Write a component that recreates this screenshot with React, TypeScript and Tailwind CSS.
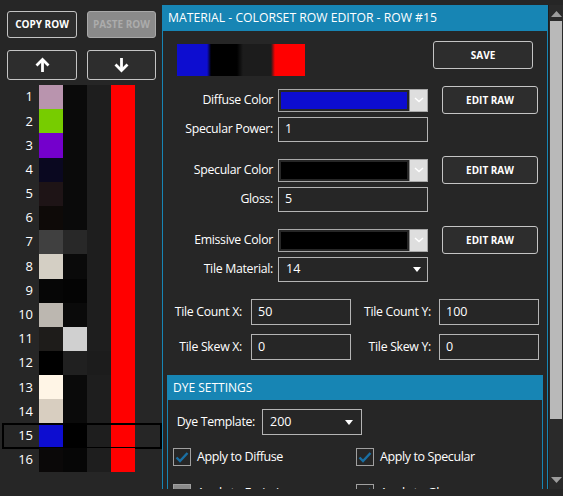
import React from "react";

const rows: [string, string, string][] = [
  ["#b994ae", "#0a0a0a", "#1e1e1e"],
  ["#77cc00", "#0a0a0a", "#1e1e1e"],
  ["#7400cc", "#0a0a0a", "#1e1e1e"],
  ["#0a0820", "#0a0a0a", "#1e1e1e"],
  ["#1e1416", "#0a0a0a", "#1e1e1e"],
  ["#0e0a08", "#0a0a0a", "#1e1e1e"],
  ["#404040", "#282828", "#1e1e1e"],
  ["#d4cfc4", "#0a0a0a", "#1e1e1e"],
  ["#060606", "#040404", "#1e1e1e"],
  ["#bcb7b0", "#0a0a0a", "#1e1e1e"],
  ["#1e1c1a", "#d0d0d0", "#1e1e1e"],
  ["#000000", "#202020", "#1c1c1c"],
  ["#fff5e6", "#0a0a0a", "#1e1e1e"],
  ["#d8cec0", "#0a0a0a", "#1e1e1e"],
  ["#0d0dd0", "#000000", "#1e1e1e"],
  ["#0a0808", "#060606", "#1e1e1e"],
];

function ArrowUp() {
  return (
    <svg width="17" height="16" viewBox="0 0 17 16" fill="none" stroke="white" strokeWidth="2.8">
      <path d="M8.5 15V3" />
      <path d="M2.5 8.5L8.5 2.5L14.5 8.5" />
    </svg>
  );
}
function ArrowDown() {
  return (
    <svg width="17" height="16" viewBox="0 0 17 16" fill="none" stroke="white" strokeWidth="2.8">
      <path d="M8.5 1V13" />
      <path d="M2.5 7.5L8.5 13.5L14.5 7.5" />
    </svg>
  );
}

function Btn({ children, w, h, disabled }: { children: React.ReactNode; w: string; h: string; disabled?: boolean }) {
  return (
    <div
      className={
        "flex items-center justify-center rounded-[3px] border font-bold text-[10px] " +
        w +
        " " +
        h +
        " " +
        (disabled ? "bg-[#8a8a8a] border-[#a8a8a8] text-[#acacac]" : "bg-[#2d2d2d] border-[#c4c4c4] text-white")
      }
    >
      {children}
    </div>
  );
}

function Left() {
  return (
    <div className="w-[162px] shrink-0 flex flex-col pt-[11px]">
      <div className="flex pl-[7px] gap-[10px]">
        <Btn w="w-[70px]" h="h-[27px]">COPY ROW</Btn>
        <Btn w="w-[69px]" h="h-[27px]" disabled>PASTE ROW</Btn>
      </div>
      <div className="flex pl-[7px] gap-[10px] mt-[12px]">
        <Btn w="w-[70px]" h="h-[30px]"><ArrowUp /></Btn>
        <Btn w="w-[69px]" h="h-[30px]"><ArrowDown /></Btn>
      </div>
      <div className="mt-[5px] flex flex-col">
        {rows.map((r, i) => (
          <div
            key={i}
            className={
              "flex h-[24.2px] ml-[3px] w-[158px] items-stretch " +
              (i === 14 ? "outline-2 outline-black -outline-offset-1" : "")
            }
          >
            <div className="w-[30px] text-right text-white text-[13px] flex items-center justify-end">{i + 1}</div>
            <div className="w-[6px]" />
            <div className="w-[24px]" style={{ background: r[0] }} />
            <div className="w-[24px]" style={{ background: r[1] }} />
            <div className="w-[24px]" style={{ background: r[2] }} />
            <div className="w-[24px] bg-[#ff0000]" />
          </div>
        ))}
      </div>
    </div>
  );
}

function Label({ children, w }: { children: React.ReactNode; w: string }) {
  return <div className={"text-right text-white text-[12.3px] tracking-[-0.3px] shrink-0 " + w}>{children}</div>;
}

function Input({ value, w, h }: { value: string; w: string; h: string }) {
  return (
    <div className={"border border-[#b4b4b4] flex items-center pl-[6px] text-white text-[12.5px] shrink-0 " + w + " " + h}>
      {value}
    </div>
  );
}

function Dropdown({ value, w, h, tri }: { value: string; w: string; h: string; tri: string }) {
  return (
    <div className={"border border-[#b4b4b4] flex items-center pl-[7px] text-white text-[12.5px] shrink-0 " + w + " " + h}>
      <span className="flex-1">{value}</span>
      <svg width="8" height="5" viewBox="0 0 8 5" className={tri}>
        <path d="M0 0H8L4 5Z" fill="white" />
      </svg>
    </div>
  );
}

function ColorCombo({ color }: { color: string }) {
  return (
    <div className="w-[150px] h-[23px] border border-[#a8a8a8] flex shrink-0">
      <div className="flex-1 p-[2px]">
        <div className="w-full h-full" style={{ background: color }} />
      </div>
      <div className="w-[18px] bg-[#dedede] border-l border-[#8c8c8c] flex items-center justify-center">
        <svg width="10" height="6" viewBox="0 0 10 6" fill="none">
          <path d="M1 1L5 4.5L9 1" stroke="white" strokeWidth="1.5" />
        </svg>
      </div>
    </div>
  );
}

function Check({ checked, filled }: { checked?: boolean; filled?: boolean }) {
  return (
    <div className={"w-[18px] h-[18px] border border-[#a0a0a0] shrink-0 flex items-center justify-center " + (filled ? "bg-[#8a8a8a]" : "")}>
      {checked && (
        <svg width="14" height="12" viewBox="0 0 14 12" fill="none">
          <path d="M1.5 6.5L5 10L12.5 2" stroke="#1a6fa3" strokeWidth="2.4" />
        </svg>
      )}
    </div>
  );
}

function CheckLabel({ children }: { children: React.ReactNode }) {
  return <span className="ml-[6px] text-white text-[12.5px] tracking-[-0.4px]">{children}</span>;
}

function Right() {
  return (
    <div className="w-[386px] shrink-0 mt-[5px] h-[484px] border-x border-[#1785b4] flex flex-col overflow-hidden">
      <div className="h-[26px] shrink-0 bg-[#1785b4] text-white text-[12.2px] pl-[5px] flex items-center">
        MATERIAL - COLORSET ROW EDITOR - ROW #15
      </div>
      <div className="flex items-start mt-[10px] shrink-0">
        <div className="ml-[14px] mt-[3px] w-[128px] h-[32px] bg-[linear-gradient(to_right,#0d0dd0_0px,#0d0dd0_30px,#000000_34px,#000000_60px,#1c1c1c_66px,#1c1c1c_94px,#ff0000_98px,#ff0000_128px)]" />
        <div className="ml-[128px]">
          <Btn w="w-[100px]" h="h-[28px]">SAVE</Btn>
        </div>
      </div>

      <div className="flex items-center h-[28px] mt-[10px] shrink-0">
        <Label w="w-[110px]">Diffuse Color</Label>
        <div className="ml-[5px]"><ColorCombo color="#0d0dd0" /></div>
        <div className="ml-[14px]"><Btn w="w-[96px]" h="h-[28px]">EDIT RAW</Btn></div>
      </div>
      <div className="flex items-center mt-[3px] shrink-0">
        <Label w="w-[110px]">Specular Power:</Label>
        <div className="ml-[5px]"><Input value="1" w="w-[150px]" h="h-[25px]" /></div>
      </div>

      <div className="flex items-center h-[28px] mt-[14px] shrink-0">
        <Label w="w-[110px]">Specular Color</Label>
        <div className="ml-[5px]"><ColorCombo color="#000000" /></div>
        <div className="ml-[14px]"><Btn w="w-[96px]" h="h-[28px]">EDIT RAW</Btn></div>
      </div>
      <div className="flex items-center mt-[3px] shrink-0">
        <Label w="w-[110px]">Gloss:</Label>
        <div className="ml-[5px]"><Input value="5" w="w-[150px]" h="h-[25px]" /></div>
      </div>

      <div className="flex items-center h-[28px] mt-[14px] shrink-0">
        <Label w="w-[110px]">Emissive Color</Label>
        <div className="ml-[5px]"><ColorCombo color="#000000" /></div>
        <div className="ml-[14px]"><Btn w="w-[96px]" h="h-[28px]">EDIT RAW</Btn></div>
      </div>
      <div className="flex items-center mt-[3px] shrink-0">
        <Label w="w-[110px]">Tile Material:</Label>
        <div className="ml-[5px]"><Dropdown value="14" w="w-[150px]" h="h-[25px]" tri="mr-[6px]" /></div>
      </div>

      <div className="flex items-center mt-[17px] shrink-0">
        <Label w="w-[79px]">Tile Count X:</Label>
        <div className="ml-[9px]"><Input value="50" w="w-[100px]" h="h-[26px]" /></div>
        <Label w="w-[80px]">Tile Count Y:</Label>
        <div className="ml-[8px]"><Input value="100" w="w-[100px]" h="h-[26px]" /></div>
      </div>
      <div className="flex items-center mt-[9px] shrink-0">
        <Label w="w-[79px]">Tile Skew X:</Label>
        <div className="ml-[9px]"><Input value="0" w="w-[100px]" h="h-[26px]" /></div>
        <Label w="w-[80px]">Tile Skew Y:</Label>
        <div className="ml-[8px]"><Input value="0" w="w-[100px]" h="h-[26px]" /></div>
      </div>

      <div className="ml-[4px] w-[376px] mt-[15px] flex-1 border-x border-[#1785b4] flex flex-col">
        <div className="h-[25px] shrink-0 bg-[#1785b4] text-white text-[12px] pl-[5px] flex items-center">DYE SETTINGS</div>
        <div className="flex items-center mt-[9px] shrink-0">
          <Label w="w-[87px]">Dye Template:</Label>
          <div className="ml-[7px]"><Dropdown value="200" w="w-[100px]" h="h-[26px]" tri="mr-[8px]" /></div>
        </div>
        <div className="flex mt-[13px] pl-[5px] shrink-0">
          <div className="w-[183px] flex items-center">
            <Check checked />
            <CheckLabel>Apply to Diffuse</CheckLabel>
          </div>
          <div className="w-[183px] flex items-center">
            <Check checked />
            <CheckLabel>Apply to Specular</CheckLabel>
          </div>
        </div>
        <div className="flex mt-[17px] pl-[5px] shrink-0">
          <div className="w-[183px] flex items-center">
            <Check filled />
            <CheckLabel>Apply to Emissive</CheckLabel>
          </div>
          <div className="w-[183px] flex items-center">
            <Check checked />
            <CheckLabel>Apply to Gloss</CheckLabel>
          </div>
        </div>
      </div>
    </div>
  );
}

function Scrollbar() {
  return (
    <div className="w-[15px] shrink-0 mt-[5px] h-[484px] bg-[#2a2a2a] border-l border-[#1e1e1e] flex flex-col items-center">
      <svg width="11" height="6" viewBox="0 0 11 6" className="mt-[6px] shrink-0">
        <path d="M0 6H11L5.5 0Z" fill="#9c9c9c" />
      </svg>
      <div className="w-[12px] mt-[4px] h-[398px] bg-[#b9b9b9]" />
      <div className="flex-1" />
      <svg width="11" height="6" viewBox="0 0 11 6" className="mb-[6px] shrink-0">
        <path d="M0 0H11L5.5 6Z" fill="#9c9c9c" />
      </svg>
    </div>
  );
}

export default function App() {
  return (
    <div
      className="w-[563px] h-[496px] bg-[#262626] flex overflow-hidden"
      style={{ fontFamily: '"Open Sans", "Noto Sans", sans-serif' }}
    >
      <Left />
      <Right />
      <Scrollbar />
    </div>
  );
}
